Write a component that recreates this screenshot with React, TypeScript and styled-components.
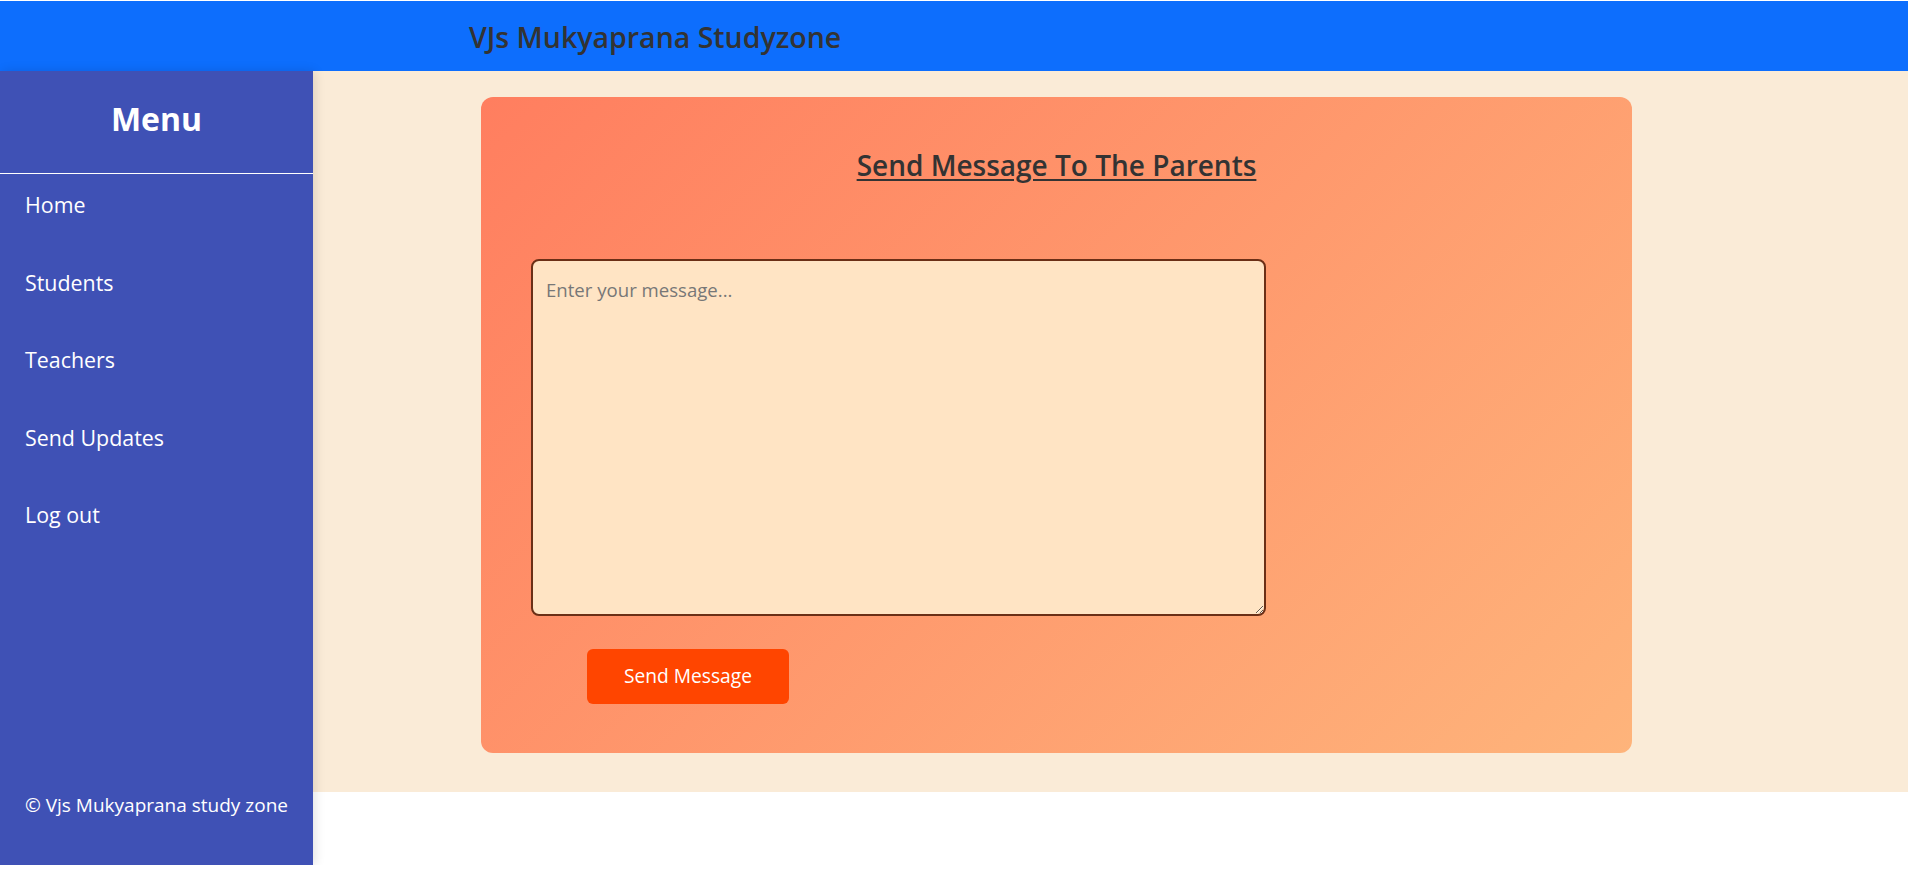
import React from "react";
import styled, { createGlobalStyle } from "styled-components";

const GlobalStyle = createGlobalStyle`
  html, body {
    margin: 0;
    padding: 0;
    background: #ffffff;
    font-family: "Open Sans", "Noto Sans", sans-serif;
  }
  * { box-sizing: border-box; }
`;

const Page = styled.div`
  padding-top: 1px;
  width: 1908px;
`;

const TopBar = styled.header`
  height: 70px;
  background: #0d6efd;
  display: flex;
  align-items: center;
  padding: 3px 0 0 469px;
`;

const Brand = styled.h2`
  margin: 0;
  font-size: 28.5px;
  line-height: 1.2;
  font-weight: 600;
  color: #333333;
`;

const Body = styled.div`
  display: flex;
  align-items: flex-start;
`;

const Sidebar = styled.aside`
  width: 313px;
  height: 794px;
  flex-shrink: 0;
  background: #3f51b5;
  color: #ffffff;
  display: flex;
  flex-direction: column;
  box-shadow: 2px 0 10px rgba(0, 0, 0, 0.12);
  position: relative;
  z-index: 1;
`;

const MenuTitle = styled.h2`
  margin: 0;
  padding: 29px 0 35px;
  text-align: center;
  font-size: 32px;
  line-height: 1.2;
  font-weight: 700;
  border-bottom: 1px solid #ffffff;
`;

const MenuList = styled.ul`
  list-style: none;
  margin: 0;
  padding: 0;
  display: flex;
  flex-direction: column;
  gap: 16px;
`;

const MenuItem = styled.li`
  padding: 15px 25px;
  font-size: 21.4px;
  line-height: 31.5px;
  color: #ffffff;
  cursor: pointer;
`;

const SideFooter = styled.p`
  margin: auto 0 0;
  padding: 0 25px 46px;
  font-size: 19px;
  line-height: 27px;
`;

const Main = styled.main`
  flex: 1;
  height: 721px;
  background: #faebd7;
  padding: 26px 0 0 168px;
`;

const Card = styled.section`
  width: 1151px;
  border-radius: 12px;
  background: linear-gradient(135deg, #ff7e5f, #feb47b);
  padding: 52px 50px 49px;
`;

const CardTitle = styled.h3`
  margin: 0 0 76px;
  text-align: center;
  font-size: 28px;
  line-height: 1.2;
  font-weight: 600;
  color: #333333;
  text-decoration: underline;
  text-underline-offset: 3px;
  text-decoration-thickness: 2px;
`;

const MessageBox = styled.textarea`
  display: block;
  width: 735px;
  height: 357px;
  margin: 0;
  padding: 15px 13px;
  background: #ffe4c4;
  border: 2px solid #6b2f16;
  border-radius: 8px;
  font-family: "Open Sans", "Noto Sans", sans-serif;
  font-size: 18.6px;
  line-height: 27px;
  color: #333333;
  outline: none;
  &::placeholder {
    color: #777777;
  }
`;

const SendButton = styled.button`
  display: block;
  margin: 33px 0 0 56px;
  padding: 13.5px 37px;
  background: #ff4500;
  color: #ffffff;
  border: none;
  border-radius: 6px;
  font-family: "Open Sans", "Noto Sans", sans-serif;
  font-size: 19.2px;
  line-height: 28px;
  cursor: pointer;
`;

const menu = ["Home", "Students", "Teachers", "Send Updates", "Log out"];

export default function App() {
  return (
    <Page>
      <GlobalStyle />
      <TopBar>
        <Brand>VJs Mukyaprana Studyzone</Brand>
      </TopBar>
      <Body>
        <Sidebar>
          <MenuTitle>Menu</MenuTitle>
          <MenuList>
            {menu.map((m) => (
              <MenuItem key={m}>{m}</MenuItem>
            ))}
          </MenuList>
          <SideFooter>© Vjs Mukyaprana study zone</SideFooter>
        </Sidebar>
        <Main>
          <Card>
            <CardTitle>Send Message To The Parents</CardTitle>
            <MessageBox placeholder="Enter your message..." />
            <SendButton>Send Message</SendButton>
          </Card>
        </Main>
      </Body>
    </Page>
  );
}
